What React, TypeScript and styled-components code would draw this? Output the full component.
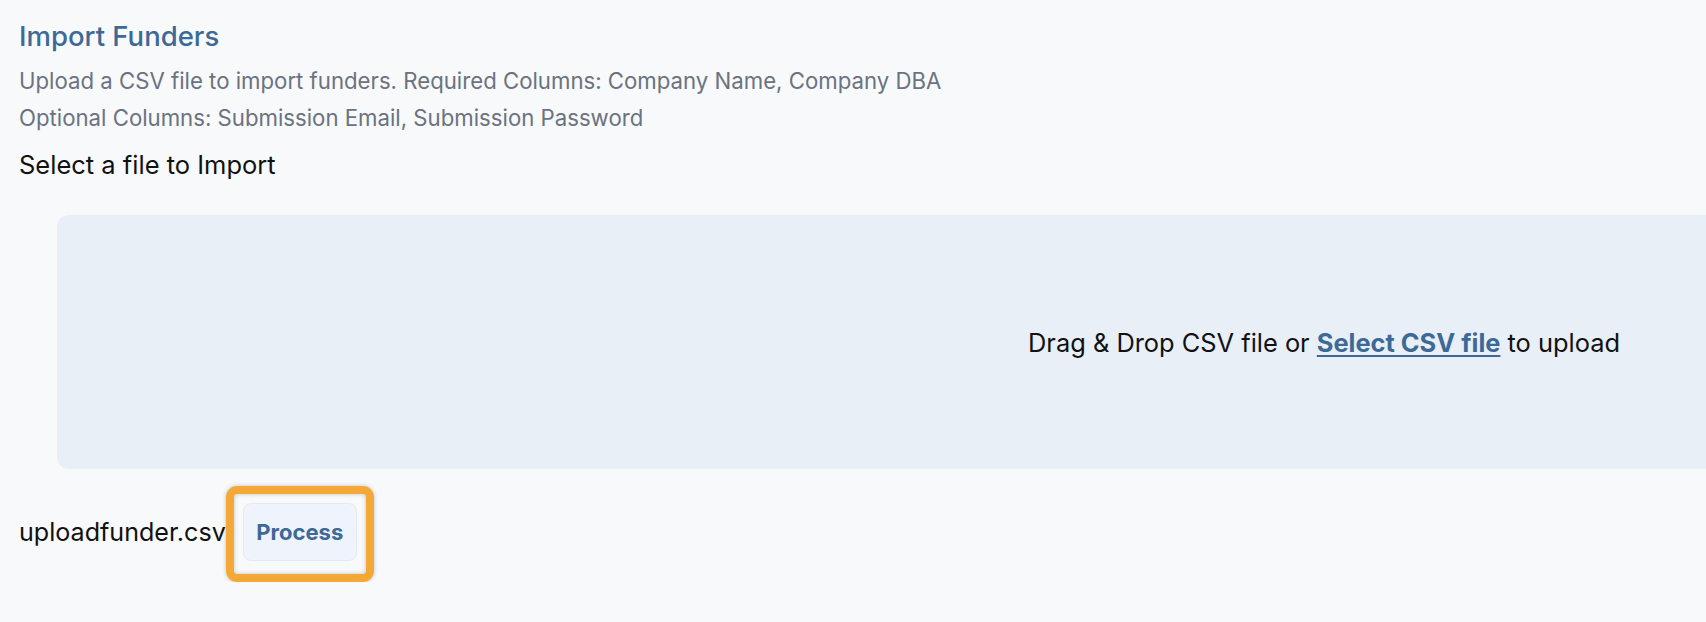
import React from "react";
import styled, { createGlobalStyle } from "styled-components";

const Global = createGlobalStyle`
  html, body {
    margin: 0;
    padding: 0;
    background: #f8f9fa;
    overflow: hidden;
  }
  body {
    font-family: Inter, "Noto Sans", sans-serif;
    color: #111;
  }
`;

const Page = styled.div`
  padding: 16px 0 0 19px;
  display: flex;
  flex-direction: column;
`;

const Title = styled.h1`
  margin: 0;
  font-size: 27.5px;
  line-height: 40px;
  font-weight: 500;
  color: #3d6996;
`;

const Hints = styled.div`
  margin-top: 6px;
`;

const Hint = styled.p`
  margin: 0;
  font-size: 22.2px;
  line-height: 37px;
  color: #6b7280;
`;

const Label = styled.div`
  margin-top: 13px;
  font-size: 25.5px;
  line-height: 32px;
`;

const DropZone = styled.div`
  margin-top: 34px;
  margin-left: 38px;
  width: 2534px;
  height: 254px;
  border-radius: 12px;
  background: #e8eff7;
  display: flex;
  align-items: center;
  justify-content: center;
  font-size: 25.4px;
`;

const Link = styled.a`
  color: #3d6996;
  font-weight: 700;
  text-decoration: underline;
  text-underline-offset: 3px;
  cursor: pointer;
`;

const FileRow = styled.div`
  margin-top: 17px;
  display: flex;
  align-items: flex-start;
  font-size: 25.1px;
`;

const FileName = styled.span`
  line-height: 30px;
  margin-top: 31px;
`;

const Highlight = styled.div`
  border: 8px solid #f4a836;
  border-radius: 11px;
  padding: 9px 9px 13px;
  box-shadow: 0 0 4px rgba(0, 0, 0, 0.22), inset 0 0 4px rgba(0, 0, 0, 0.22);
  display: flex;
`;

const ProcessButton = styled.button`
  width: 114px;
  height: 58px;
  border: 1px solid #e2e9f5;
  border-radius: 8px;
  background: #eff3fb;
  color: #3d6996;
  font-family: Inter, sans-serif;
  font-size: 22px;
  font-weight: 700;
  cursor: pointer;
`;

export default function App() {
  return (
    <>
      <Global />
      <Page>
        <Title>Import Funders</Title>
        <Hints>
          <Hint>Upload a CSV file to import funders. Required Columns: Company Name, Company DBA</Hint>
          <Hint>Optional Columns: Submission Email, Submission Password</Hint>
        </Hints>
        <Label>Select a file to Import</Label>
        <DropZone>
          <span>
            Drag &amp; Drop CSV file or <Link>Select CSV file</Link> to upload
          </span>
        </DropZone>
        <FileRow>
          <FileName>uploadfunder.csv</FileName>
          <Highlight>
            <ProcessButton>Process</ProcessButton>
          </Highlight>
        </FileRow>
      </Page>
    </>
  );
}
